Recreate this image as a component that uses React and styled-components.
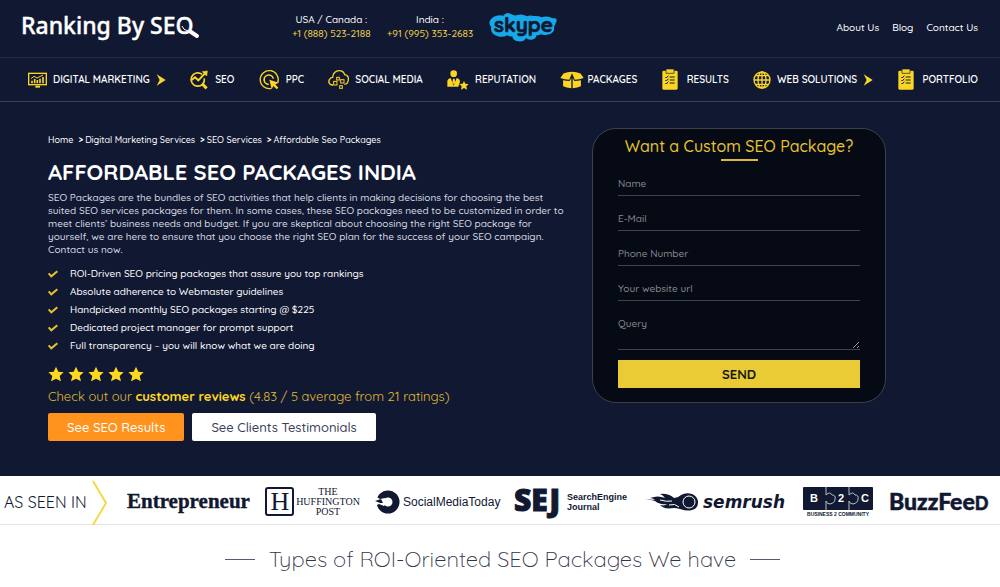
import styled, { createGlobalStyle } from 'styled-components';

const NAVY = '#111832';
const YELLOW = '#fbd524';

const NAV_ITEMS = [
  { label: 'DIGITAL MARKETING', icon: MonitorIcon, arrow: true },
  { label: 'SEO', icon: SearchChartIcon },
  { label: 'PPC', icon: TargetIcon },
  { label: 'SOCIAL MEDIA', icon: CloudIcon },
  { label: 'REPUTATION', icon: PersonStarIcon },
  { label: 'PACKAGES', icon: BoxIcon, gap: 3 },
  { label: 'RESULTS', icon: ClipboardIcon, gap: 9 },
  { label: 'WEB SOLUTIONS', icon: GlobeIcon, arrow: true },
  { label: 'PORTFOLIO', icon: ClipboardIcon, gap: 9 },
];

const BREADCRUMBS = ['Home', 'Digital Marketing Services', 'SEO Services', 'Affordable Seo Packages'];

const FEATURES = [
  'ROI-Driven SEO pricing packages that assure you top rankings',
  'Absolute adherence to Webmaster guidelines',
  'Handpicked monthly SEO packages starting @ $225',
  'Dedicated project manager for prompt support',
  'Full transparency – you will know what we are doing',
];

const FIELDS = [
  { name: 'name', label: 'Name', type: 'text' },
  { name: 'email', label: 'E-Mail', type: 'email' },
  { name: 'phone', label: 'Phone Number', type: 'tel' },
  { name: 'website', label: 'Your website url', type: 'text' },
];

function MonitorIcon() {
  return (
    <svg width="19" height="16" viewBox="0 0 57 48" fill="none" stroke={YELLOW}>
      <rect x="2" y="4" width="53" height="34" strokeWidth="4" />
      <path d="M12 34v-8M20 34v-13M28 34v-10M36 34v-14M45 34v-19" strokeWidth="5" />
      <path d="M9 20l9-7 9 5 18-9" strokeWidth="3" />
      <path d="M22 44h14" strokeWidth="6" />
    </svg>
  );
}

function SearchChartIcon() {
  return (
    <svg width="19" height="20" viewBox="0 0 57 60" fill="none" stroke={YELLOW}>
      <path d="M36 13a20 20 0 1 0 7 12" strokeWidth="5" />
      <path d="M5 30l10-8 10 9 22-23" strokeWidth="6" />
      <path d="M37 5l15-2-2 15z" fill={YELLOW} strokeWidth="2" />
      <path d="M37 42l13 13" strokeWidth="9" />
    </svg>
  );
}

function TargetIcon() {
  return (
    <svg width="21" height="20" viewBox="0 0 63 60" fill="none" stroke={YELLOW}>
      <path d="M37 55a27 27 0 1 1 19-17" strokeWidth="4" />
      <path d="M29 43a14 14 0 1 1 14-17" strokeWidth="5" />
      <path d="M31 29l29 9-11 5 9 10-5 5-10-10-5 10z" fill={YELLOW} stroke="none" />
    </svg>
  );
}

function CloudIcon() {
  return (
    <svg width="21" height="20" viewBox="0 0 63 60" fill="none" stroke={YELLOW}>
      <path d="M15 45C5 46 0 37 4 29c2-5 6-7 10-7 0-12 9-20 19-20 9 0 15 5 17 12 7 1 12 7 11 16-1 8-5 13-12 13" strokeWidth="4" />
      <rect x="17" y="34" width="10" height="11" strokeWidth="3" />
      <rect x="26" y="22" width="8" height="8" strokeWidth="3" />
      <rect x="38" y="29" width="10" height="10" strokeWidth="3" />
      <rect x="35" y="47" width="8" height="8" strokeWidth="3" />
    </svg>
  );
}

function PersonStarIcon() {
  return (
    <svg width="22" height="20" viewBox="0 0 66 60" fill={YELLOW}>
      <circle cx="20" cy="11" r="10" />
      <path d="M1 50V35c0-6 4-10 10-11l9 23 9-23c6 1 10 5 10 11l-5 15z" />
      <path d="M18 26h5l2 11-4 7-5-7z" />
      <path d="M51 33l4 8 10 1-7 7 2 10-9-5-9 5 2-10-7-7 10-1z" />
    </svg>
  );
}

function BoxIcon() {
  return (
    <svg width="24" height="18" viewBox="0 0 70 52" fill={YELLOW}>
      <path d="M10 7Q22 2 35 2t25 5l9 13q-12 5-26 5l-8-19-8 19q-14 0-26-5z" />
      <path d="M9 27q9 2 19 2l5-9v30q-14-1-24-6zM61 27q-9 2-19 2l-5-9v30q14-1 24-6z" />
    </svg>
  );
}

function ClipboardIcon() {
  return (
    <svg width="16" height="21" viewBox="0 0 48 63">
      <path fill={YELLOW} d="M5 5h38q4 0 4 4v49q0 4-4 4H5q-4 0-4-4V9q0-4 4-4z" />
      <path fill={YELLOW} stroke={NAVY} strokeWidth="2" d="M12 0h24v13H12z" />
      <path
        fill="none"
        stroke={NAVY}
        strokeWidth="3"
        d="M10 24l3 3 6-7M23 24h15M10 33l3 3 6-7M23 33h15M10 42l3 3 6-7M23 42h15"
      />
    </svg>
  );
}

function GlobeIcon() {
  return (
    <svg width="18" height="18" viewBox="0 0 54 54" fill="none" stroke={YELLOW} strokeWidth="4">
      <circle cx="27" cy="27" r="24" />
      <ellipse cx="27" cy="27" rx="12" ry="24" />
      <path d="M27 3v48M3 27h48M7 14h40M7 40h40" />
    </svg>
  );
}

function NavArrow() {
  return (
    <svg width="10" height="12" viewBox="0 0 30 36" fill={YELLOW}>
      <path d="M2 1l27 17L2 35l9-17z" />
    </svg>
  );
}

function CheckIcon() {
  return (
    <svg width="10" height="8" viewBox="0 0 30 24" fill="none" stroke="#e5c32c" strokeWidth="6">
      <path d="M2 10l8 9L28 4" />
    </svg>
  );
}

function StarIcon() {
  return (
    <svg width="16" height="16" viewBox="0 0 48 48" fill="#ffd91f">
      <path d="M24 2l7 15 16 2-12 11 4 16-15-8-15 8 4-16L1 19l16-2z" />
    </svg>
  );
}

function SiteLogo() {
  return (
    <svg width="182" height="32" viewBox="0 0 182 32" role="img" aria-label="Ranking By SEO">
      <text x="0" y="23" fill="#fff" stroke="#fff" strokeWidth="0.4" fontFamily="'Noto Sans', sans-serif" fontWeight="500" fontSize="23">
        Ranking By SEO
      </text>
      <path d="M161 15q1 4 6 5" stroke="#fff" strokeWidth="1" fill="none" />
      <path d="M170 21l6 4" stroke="#fff" strokeWidth="4" strokeLinecap="round" />
    </svg>
  );
}

function SkypeLogo() {
  return (
    <svg width="68" height="30" viewBox="0 0 204 90">
      <path
        fill="#16a8ea"
        d="M22 11q11-3 21 0Q53-3 67 7q10 5 18 2 17-4 28 4 8-4 22-1 15-1 23 4 17-6 33 3h8q6 3 3 10-5 10-7 17 3 14-12 20-15 6-28 1-5 4-13 3 0 11-14 13-13 1-17-5-7 13-23 10-17-1-18-15-9 2-15-3-15 8-31 2Q2 64 7 45q-8-7-5-17 5-12 20-17z"
      />
      <text
        x="15"
        y="60"
        fill={NAVY}
        stroke={NAVY}
        strokeWidth="2"
        fontFamily="Quicksand, Lato, sans-serif"
        fontWeight="700"
        fontSize="62"
      >
        skype
      </text>
    </svg>
  );
}

function EntrepreneurLogo() {
  return (
    <svg width="124" height="28" viewBox="0 0 124 28">
      <text x="1" y="20" fill={NAVY} stroke={NAVY} strokeWidth="0.4" fontFamily="'Liberation Serif', serif" fontWeight="700" fontSize="21">
        Entrepreneur
      </text>
    </svg>
  );
}

function HuffingtonLogo() {
  return (
    <svg width="96" height="30" viewBox="0 0 96 30" fill={NAVY} fontFamily="'Liberation Serif', serif">
      <rect x="1" y="1" width="27" height="27" rx="2" fill="none" stroke={NAVY} strokeWidth="2" />
      <text x="15" y="23" textAnchor="middle" fontSize="26">H</text>
      <g fontSize="10" textAnchor="middle">
        <text x="63" y="8">THE</text>
        <text x="63" y="18">HUFFINGTON</text>
        <text x="63" y="28">POST</text>
      </g>
    </svg>
  );
}

function SocialMediaTodayLogo() {
  return (
    <svg width="125" height="24" viewBox="0 0 125 24" fill={NAVY}>
      <circle cx="13" cy="12" r="8" fill="none" stroke={NAVY} strokeWidth="7" />
      <path d="M0 6l5 3 5-1 3 4-4 4-5-2-4 2z" fill="#fff" />
      <path d="M0 11l6-2 2 4H5z" />
      <text x="28" y="16" fontFamily="'Liberation Sans', sans-serif" fontSize="12">
        SocialMediaToday
      </text>
    </svg>
  );
}

function SejLogo() {
  return (
    <svg width="112" height="28" viewBox="0 0 112 28" fill={NAVY}>
      <text x="-1" y="23" fontFamily="'Noto Sans', sans-serif" fontWeight="900" fontSize="30" stroke={NAVY}>SEJ</text>
      <g fontFamily="'Liberation Sans', sans-serif" fontWeight="700" fontSize="9">
        <text x="52" y="12">SearchEngine</text>
        <text x="52" y="22">Journal</text>
      </g>
    </svg>
  );
}

function SemrushLogo() {
  return (
    <svg width="146" height="20" viewBox="0 0 146 20" fill={NAVY}>
      <path d="M0 8q8-1 13 0-2-2-5-2 8-3 15 0-2-3-5-4 8-1 14 4 4 0 7-3 5-3 11-1c8 3 8 14 0 16-7 2-12-2-18-2-8 1-11 0-14-3 4 1 6 0 7-1-4 1-10-1-12-3Q8 7 0 8z" />
      <circle cx="47" cy="10" r="6" fill="none" stroke="#fff" strokeWidth="1" />
      <path d="M18 8q7 2 12 1M27 13q6-2 10 2" fill="none" stroke="#fff" strokeWidth="1" />
      <text x="61" y="16" fontFamily="'DejaVu Sans', sans-serif" fontStyle="italic" fontWeight="700" fontSize="17">
        semrush
      </text>
    </svg>
  );
}

function B2cLogo() {
  return (
    <svg width="72" height="30" viewBox="0 0 72 30" fontFamily="'Liberation Sans', sans-serif" fontWeight="700">
      <rect x="1" y="0" width="70" height="23" rx="1" fill={NAVY} />
      <path
        d="M24 0v8q4-4 6 0 4 0 3 4 0 4-5 5-3 0-4-3v9M47 0v8q4-4 6 0 4 0 3 4 0 4-5 5-3 0-4-3v9"
        fill="none"
        stroke="#b9bdc9"
        strokeWidth="1"
      />
      <g fill="#fff" fontSize="11" textAnchor="middle">
        <text x="12" y="15">B</text>
        <text x="39" y="15">2</text>
        <text x="63" y="15">C</text>
      </g>
      <text x="36" y="29" textAnchor="middle" fill={NAVY} fontSize="5">BUSINESS 2 COMMUNITY</text>
    </svg>
  );
}

function BuzzFeedLogo() {
  return (
    <svg width="102" height="26" viewBox="0 0 102 26">
      <text x="0" y="21" fill={NAVY} stroke={NAVY} strokeWidth="0.5" fontFamily="Lato, sans-serif" fontWeight="900" fontSize="23">
        BuzzFee<tspan fontSize="18">D</tspan>
      </text>
    </svg>
  );
}

export default function App() {
  return (
    <>
      <GlobalStyle />
      <TopBar>
        <LogoLink href="#"><SiteLogo /></LogoLink>
        <Contacts>
          <Phone>
            <span>USA / Canada :</span>
            <a href="tel:+18885232188">+1 (888) 523-2188</a>
          </Phone>
          <Phone>
            <span>India :</span>
            <a href="tel:+919953532683">+91 (995) 353-2683</a>
          </Phone>
          <LogoLink href="#" aria-label="Skype"><SkypeLogo /></LogoLink>
        </Contacts>
        <TopLinks>
          <a href="#">About Us</a>
          <a href="#">Blog</a>
          <a href="#">Contact Us</a>
        </TopLinks>
      </TopBar>

      <Nav>
        {NAV_ITEMS.map(({ label, icon: Icon, arrow, gap = 6 }) => (
          <NavLink key={label} href="#" $gap={gap}>
            <Icon />
            {label}
            {arrow && <NavArrow />}
          </NavLink>
        ))}
      </Nav>

      <Hero>
        <div>
          <Breadcrumbs>
            {BREADCRUMBS.map(crumb => (
              <li key={crumb}><a href="#">{crumb}</a></li>
            ))}
          </Breadcrumbs>
          <Title>AFFORDABLE SEO PACKAGES INDIA</Title>
          <Intro>
            SEO Packages are the bundles of SEO activities that help clients in making decisions for choosing the best<br />
            suited SEO services packages for them. In some cases, these SEO packages need to be customized in order to<br />
            meet clients’ business needs and budget. If you are skeptical about choosing the right SEO package for<br />
            yourself, we are here to ensure that you choose the right SEO plan for the success of your SEO campaign.<br />
            Contact us now.
          </Intro>
          <FeatureList>
            {FEATURES.map(feature => (
              <li key={feature}><CheckIcon />{feature}</li>
            ))}
          </FeatureList>
          <Stars>
            {[...Array(5).keys()].map(star => <StarIcon key={star} />)}
          </Stars>
          <Reviews>
            Check out our <a href="#">customer reviews</a> (4.83 / 5 average from 21 ratings)
          </Reviews>
          <Actions>
            <ActionButton type="button" $primary>See SEO Results</ActionButton>
            <ActionButton type="button">See Clients Testimonials</ActionButton>
          </Actions>
        </div>

        <QuoteForm onSubmit={event => event.preventDefault()}>
          <FormTitle>Want a Custom SEO Package?</FormTitle>
          {FIELDS.map(({ name, label, type }) => (
            <Field key={name} name={name} type={type} placeholder={label} aria-label={label} />
          ))}
          <QueryField name="query" placeholder="Query" aria-label="Query" />
          <SendButton type="submit">SEND</SendButton>
        </QuoteForm>
      </Hero>

      <SeenIn>
        <SeenLabel>
          AS SEEN IN
          <svg width="15" height="45" viewBox="0 0 15 45" fill="none" stroke="#f3da45" strokeWidth="2">
            <path d="M1 1l13 22L1 45" />
          </svg>
        </SeenLabel>
        <Brands>
          <EntrepreneurLogo />
          <HuffingtonLogo />
          <SocialMediaTodayLogo />
          <SejLogo />
          <SemrushLogo />
          <B2cLogo />
          <BuzzFeedLogo />
        </Brands>
      </SeenIn>

      <SectionTitle>Types of ROI-Oriented SEO Packages We have</SectionTitle>
    </>
  );
}

const GlobalStyle = createGlobalStyle`
  * {
    box-sizing: border-box;
  }

  body {
    margin: 0;
    background: #fff;
    color: #fff;
    font-family: Quicksand, Lato, sans-serif;
    font-size: 10px;
    font-weight: 500;
  }

  a {
    color: inherit;
    text-decoration: none;
  }

  svg {
    display: block;
    flex: none;
    overflow: visible;
  }

  button, input, textarea {
    font-family: inherit;
    font-weight: inherit;
  }
`;

const TopBar = styled.header`
  display: grid;
  grid-template-columns: 271px 1fr auto;
  align-items: center;
  height: 58px;
  padding: 0 22px 3px 21px;
  background: ${NAVY};
  border-bottom: 1px solid #252c45;
`;

const LogoLink = styled.a`
  display: block;
`;

const Contacts = styled.div`
  display: flex;
  align-items: center;
  gap: 16px;
`;

const Phone = styled.div`
  display: flex;
  flex-direction: column;
  align-items: center;
  line-height: 14px;

  & > a {
    color: #ecd04a;
  }
`;

const TopLinks = styled.nav`
  display: flex;
  gap: 13px;
`;

const Nav = styled.nav`
  display: flex;
  justify-content: space-between;
  align-items: center;
  height: 44px;
  padding: 0 22px 0 28px;
  background: ${NAVY};
  border-bottom: 1px solid #3a4058;
`;

const NavLink = styled.a`
  display: flex;
  align-items: center;
  gap: ${props => props.$gap}px;
  font-size: 10px;
  font-weight: 600;
  white-space: nowrap;
`;

const Hero = styled.main`
  display: grid;
  grid-template-columns: minmax(0, 1fr) 294px;
  gap: 24px;
  align-items: start;
  padding: 26px 114px 35px 48px;
  background: ${NAVY};
`;

const Breadcrumbs = styled.ul`
  display: flex;
  margin: 4px 0 11px;
  padding: 0;
  list-style: none;
  font-size: 9px;
  line-height: 16px;

  & > li + li::before {
    content: '>';
    margin: 0 2px 0 5px;
    font-weight: 900;
  }
`;

const Title = styled.h1`
  margin: 0 0 6px;
  font-size: 22px;
  line-height: 26px;
  font-weight: 700;
  white-space: nowrap;
`;

const Intro = styled.p`
  margin: 0 0 9px;
  color: #d7d9e0;
  line-height: 13px;
  white-space: nowrap;
`;

const FeatureList = styled.ul`
  margin: 0 0 11px;
  padding: 0;
  list-style: none;
  line-height: 18px;

  & > li {
    display: flex;
    align-items: center;
    gap: 12px;
  }
`;

const Stars = styled.div`
  display: flex;
  gap: 4px;
`;

const Reviews = styled.p`
  margin: 4px 0 7px;
  color: #e0bd32;
  font-size: 13px;
  line-height: 20px;
  font-weight: 400;

  & > a {
    color: #ffd91f;
    font-weight: 700;
  }
`;

const Actions = styled.div`
  display: flex;
  gap: 8px;
`;

const ActionButton = styled.button`
  height: 28px;
  padding: 0 19px;
  border: 0;
  border-radius: 2px;
  background: ${props => (props.$primary ? '#ff931e' : '#fff')};
  color: ${props => (props.$primary ? '#fff' : '#38405a')};
  font-size: 13px;
`;

const QuoteForm = styled.form`
  display: flex;
  flex-direction: column;
  padding: 5px 25px 14px;
  border: 1px solid #3c404a;
  border-radius: 24px;
  background: #050a14;
`;

const FormTitle = styled.h2`
  margin: 0 0 7px;
  color: #e8c42f;
  font-size: 16px;
  line-height: 24px;
  font-weight: 500;
  text-align: center;

  &::after {
    content: '';
    display: block;
    width: 37px;
    height: 2px;
    margin: 1px auto 0;
    background: #dcb93a;
  }
`;

const Field = styled.input`
  height: 28px;
  margin-bottom: 7px;
  padding: 3px 0 0;
  border: 0;
  border-bottom: 1px solid #3f444c;
  background: none;
  color: #fff;
  font-size: 10px;

  &::placeholder {
    color: #85888f;
  }
`;

const QueryField = styled(Field).attrs({ as: 'textarea' })`
  height: 42px;
  margin-bottom: 10px;
  padding-top: 9px;
  resize: vertical;
`;

const SendButton = styled.button`
  height: 28px;
  border: 0;
  background: #e9cc35;
  color: #15170f;
  font-size: 13px;
  font-weight: 700;
`;

const SeenIn = styled.section`
  display: flex;
  align-items: center;
  height: 49px;
  padding: 4px 9px 0 4px;
  border-bottom: 1px solid #e4e4e8;
  color: ${NAVY};
`;

const SeenLabel = styled.div`
  display: flex;
  align-items: center;
  justify-content: space-between;
  flex: none;
  width: 103px;
  margin-right: 19px;
  font-size: 16px;
  font-weight: 400;
`;

const Brands = styled.div`
  display: flex;
  flex: 1;
  align-items: center;
  justify-content: space-between;
`;

const SectionTitle = styled.h2`
  display: flex;
  align-items: center;
  justify-content: center;
  gap: 14px;
  margin: 19px 0 12px;
  padding-left: 5px;
  color: #2f3446;
  font-size: 22px;
  line-height: 30px;
  font-weight: 300;

  &::before,
  &::after {
    content: '';
    width: 30px;
    height: 1px;
    background: #555a6e;
  }
`;
